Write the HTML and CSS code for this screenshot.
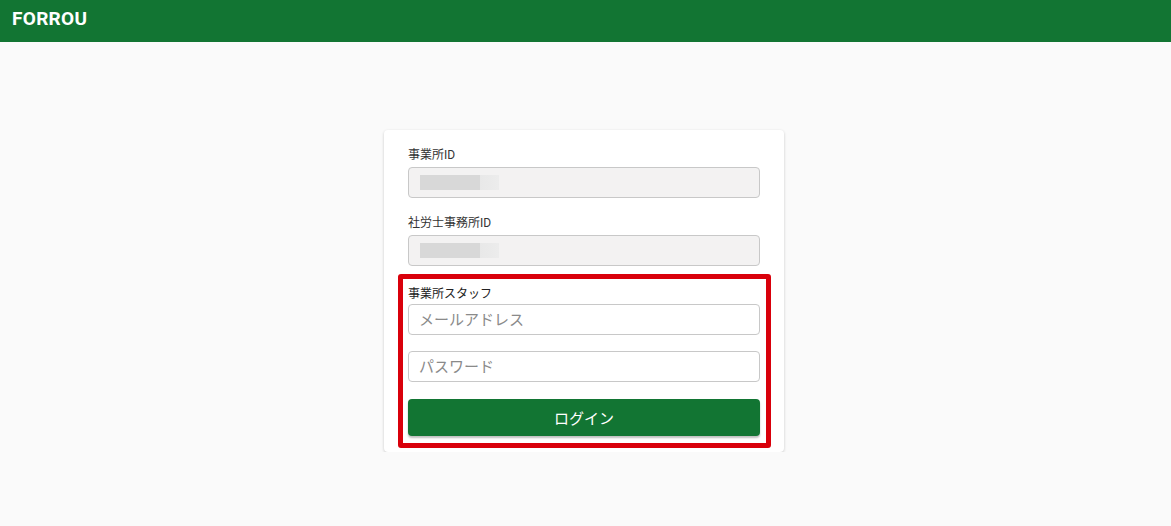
FILE: index.html
```html
<!DOCTYPE html>
<html lang="ja">
<head>
    <meta charset="UTF-8">
    <meta name="viewport" content="width=device-width, initial-scale=1.0">
    <title>FORROU</title>
    <link rel="stylesheet" href="styles.css">
</head>
<body>
    <header class="topbar">
        <h1>FORROU</h1>
    </header>
    <main class="page">
        <form class="card">
            <label class="field-label">事業所ID</label>
            <div class="input readonly"><span class="blur"></span></div>

            <label class="field-label second">社労士事務所ID</label>
            <div class="input readonly"><span class="blur"></span></div>

            <div class="staff">
                <div class="highlight"></div>
                <label class="staff-label">事業所スタッフ</label>
                <input class="input" type="email" placeholder="メールアドレス">
                <input class="input pass" type="password" placeholder="パスワード">
                <button type="button" class="login">ログイン</button>
            </div>
        </form>
    </main>
</body>
</html>
```

FILE: styles.css
```css
body {
    margin: 0;
    padding: 0;
    background-color: #fafafa;
    font-family: Roboto, "Noto Sans CJK JP", sans-serif;
    color: #333;
}
.topbar {
    background-color: #127533;
    height: 42px;
    box-sizing: border-box;
    display: flex;
    align-items: center;
    padding: 0 12px 6px 12px;
}
.topbar h1 {
    margin: 0;
    color: #fff;
    font-size: 19px;
    font-weight: 700;
    letter-spacing: 0.3px;
}
.page {
    display: flex;
    justify-content: center;
    padding-top: 88px;
    padding-right: 3px;
}
.card {
    width: 352px;
    background-color: #fff;
    border-radius: 4px;
    box-shadow: 0 1px 3px rgba(0, 0, 0, 0.2);
    padding: 16px 24px 16px 24px;
    display: flex;
    flex-direction: column;
}
.field-label {
    font-size: 12px;
    line-height: 18px;
    color: #333;
    margin-bottom: 3px;
}
.field-label.second {
    margin-top: 16px;
}
.input {
    box-sizing: border-box;
    height: 31px;
    width: 100%;
    border: 1px solid #c8c8c8;
    border-radius: 4px;
    background-color: #fff;
    padding: 0 10px;
    font-family: Roboto, "Noto Sans CJK JP", sans-serif;
    font-size: 15px;
    color: #333;
    outline: none;
}
.input::placeholder {
    color: #8a8a8a;
}
.input.readonly {
    background-color: #f3f2f2;
    display: flex;
    align-items: center;
    padding: 0 11px;
}
.blur {
    display: block;
    width: 79px;
    height: 15px;
    background: linear-gradient(90deg, #d8d8d8 0, #d8d8d8 60px, #e8e8e8 60px, #ececec 79px);
}
.staff {
    position: relative;
    margin-top: 19px;
    display: flex;
    flex-direction: column;
}
.highlight {
    position: absolute;
    left: -10px;
    right: -11px;
    top: -11px;
    bottom: -12px;
    border: 5px solid #d9000b;
    border-radius: 3px;
    pointer-events: none;
}
.staff-label {
    font-size: 12px;
    line-height: 18px;
    color: #222;
    margin: 0 0 1px 0;
}
.input.pass {
    margin-top: 16px;
}
.login {
    margin-top: 17px;
    height: 37px;
    border: none;
    border-radius: 4px;
    background-color: #127533;
    color: #fff;
    font-family: Roboto, "Noto Sans CJK JP", sans-serif;
    font-size: 15px;
    cursor: pointer;
    box-shadow: 0 2px 2px rgba(0, 0, 0, 0.25);
}
```
